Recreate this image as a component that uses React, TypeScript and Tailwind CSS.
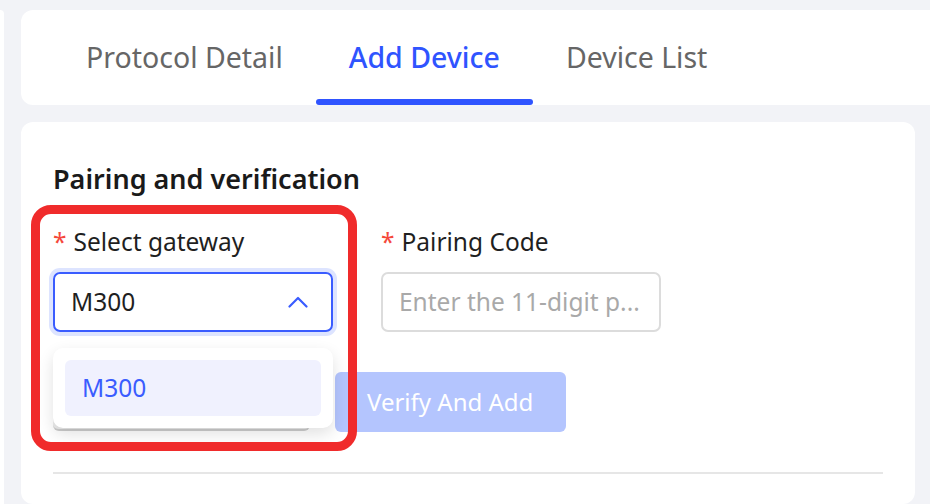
// Add Device tab — pairing form with the gateway select opened

const FONT = "font-['Noto_Sans','Liberation_Sans',sans-serif]";

function Tabs() {
  const tabs = ["Protocol Detail", "Add Device", "Device List"];
  return (
    <div className="h-[95px] bg-white rounded-[12px] -mr-[20px] flex items-stretch pl-[32px] shrink-0">
      {tabs.map((t) => {
        const active = t === "Add Device";
        return (
          <div key={t} className="relative px-[33px] flex items-center">
            <span
              className={
                active
                  ? "text-[28.5px] text-[#2f54ff] font-medium"
                  : "text-[28.5px] text-[#666666]"
              }
            >
              {t}
            </span>
            {active && (
              <div className="absolute left-0 right-0 bottom-0 h-[6px] rounded-full bg-[#2f54ff]" />
            )}
          </div>
        );
      })}
    </div>
  );
}

function Label({ text }: { text: string }) {
  return (
    <div className="h-[36px] flex items-center text-[24.5px] text-[#1f1f1f]">
      <span className="text-[#f5483b] mr-[7px]">*</span>
      {text}
    </div>
  );
}

function GatewaySelect() {
  return (
    <div className="relative w-[280px]">
      <Label text="Select gateway" />
      <div className="mt-[12px] h-[60px] rounded-[7px] border-2 border-[#3a5cff] ring-[4px] ring-[#dde4ff] flex items-center justify-between pl-[16px] pr-[23px] text-[24.5px] text-[#1f1f1f]">
        <span>M300</span>
        <svg width="20" height="12" viewBox="0 0 20 12" fill="none">
          <polyline
            points="1.5,10.5 10,2 18.5,10.5"
            stroke="#3a5cff"
            strokeWidth="2.2"
            strokeLinecap="round"
            strokeLinejoin="round"
          />
        </svg>
      </div>
      {/* layer peeking out below the open menu */}
      <div className="absolute left-0 w-[257px] top-[140px] h-[67px] rounded-b-[6px] bg-[#ececec] border-b-2 border-[#cccccc]" />
      <div className="absolute left-0 top-[124px] w-[280px] h-[80px] bg-white rounded-[10px] shadow-[0_6px_16px_rgba(0,0,0,0.12)] p-[12px]">
        <div className="h-[56px] rounded-[6px] bg-[#f0f1fe] flex items-center pl-[17px] text-[24.5px] text-[#3a5cff]">
          M300
        </div>
      </div>
    </div>
  );
}

export default function App() {
  return (
    <div className={`relative w-[930px] h-[504px] bg-[#f2f3f7] flex overflow-hidden ${FONT}`}>
      <div className="w-[4px] mt-[10px] bg-white rounded-tr-[4px] shrink-0" />
      <div className="ml-[17px] flex-1 min-w-0 pt-[10px] flex flex-col">
        <Tabs />
        <div className="mt-[17px] mr-[15px] flex-1 bg-white rounded-[12px] px-[32px] pt-[39px]">
          <h2 className="text-[27px] leading-[36px] font-semibold text-[#1a1a1a]">
            Pairing and verification
          </h2>
          <div className="mt-[27px] flex gap-[48px]">
            <GatewaySelect />
            <div className="w-[280px]">
              <Label text="Pairing Code" />
              <div className="mt-[12px] h-[60px] rounded-[7px] border-2 border-[#dcdcdc] flex items-center pl-[16px] text-[24.5px] text-[#a9a9a9] whitespace-nowrap">
                Enter the 11-digit p...
              </div>
            </div>
          </div>
          <div className="mt-[40px] ml-[282px]">
            <div className="w-[231px] h-[60px] rounded-[6px] bg-[#b4c5fe] flex items-center pl-[32px] text-[24px] text-white">
              Verify And Add
            </div>
          </div>
          <div className="mt-[40px] h-[2px] bg-[#e6e6e6]" />
        </div>
      </div>
      {/* annotation frame */}
      <div className="absolute left-[31px] top-[205px] w-[326px] h-[246px] border-[9px] border-[#f02b2b] rounded-[20px] z-10" />
    </div>
  );
}
